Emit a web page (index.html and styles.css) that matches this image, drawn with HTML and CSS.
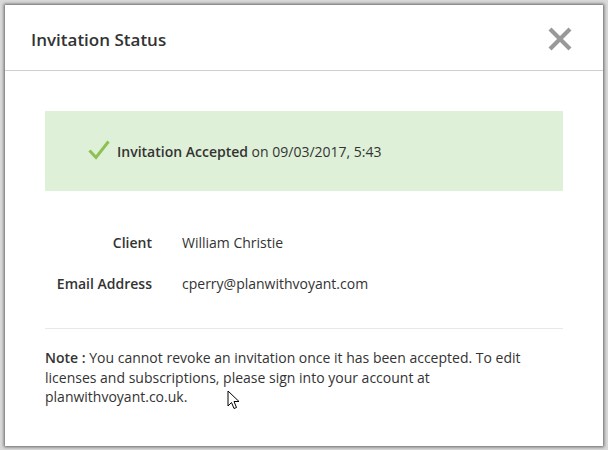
FILE: index.html
```html
<!DOCTYPE html>
<html>
<head>
<meta charset="utf-8">
<link rel="stylesheet" href="styles.css">
</head>
<body>
<div class="modal">
  <div class="modal-header">
    <h2 class="title">Invitation Status</h2>
    <svg class="close" width="26" height="26" viewBox="0 0 26 26"><path d="M3 3 L23 23 M23 3 L3 23" stroke="#999" stroke-width="4.2" fill="none"/></svg>
  </div>
  <div class="modal-body">
    <div class="alert">
      <svg class="check" width="22" height="20" viewBox="0 0 22 20"><path d="M1.5 10.5 L8 17.5 L20.5 1.5" stroke="#8dc153" stroke-width="3" fill="none" stroke-linejoin="miter"/></svg>
      <span><b>Invitation Accepted</b> on 09/03/2017, 5:43</span>
    </div>
    <div class="details">
      <div class="label">Client</div><div class="value">William Christie</div>
      <div class="label">Email Address</div><div class="value">cperry@planwithvoyant.com</div>
    </div>
    <hr class="divider">
    <p class="note"><b>Note :</b> You cannot revoke an invitation once it has been accepted. To edit licenses and subscriptions, please sign into your account at planwithvoyant.co.uk.</p>
  </div>
  <svg class="cursor" width="14" height="22" viewBox="0 0 14 22"><path d="M1 1 L1 16 L4.5 12.5 L7 18.5 L9.5 17.5 L7 11.5 L12 11.5 Z" fill="#fff" stroke="#000" stroke-width="1" stroke-linejoin="round"/></svg>
</div>
</body>
</html>
```
FILE: styles.css
```css
html, body { margin: 0; padding: 0; }
body {
  background: #d9d9d9;
  font-family: "Open Sans", "Noto Sans", sans-serif;
  color: #333;
  width: 608px;
  height: 450px;
  overflow: hidden;
}
.modal {
  position: relative;
  margin: 5px 0 0 5px;
  width: 598px;
  height: 441px;
  background: #fff;
  box-shadow: 0 0 3px 1px rgba(0,0,0,0.55);
}
.modal-header {
  height: 65px;
  border-bottom: 1px solid #cfcfcf;
  display: flex;
  align-items: center;
  justify-content: space-between;
  padding: 0 30px 0 26px;
}
.title {
  margin: 0;
  font-size: 17px;
  font-weight: 600;
  color: #333;
  padding-top: 4px;
}
.close { margin-top: 2px; }
.modal-body {
  padding: 40px 40px 0 40px;
}
.alert {
  height: 80px;
  background: #dff0d8;
  display: flex;
  align-items: center;
  padding-left: 43px;
  font-size: 14px;
  gap: 7px;
}
.alert b { font-weight: 600; }
.check { margin-top: -2px; }
.details {
  display: grid;
  grid-template-columns: 107px 1fr;
  column-gap: 30px;
  row-gap: 21px;
  margin-top: 42px;
  font-size: 14px;
  line-height: 20px;
}
.label { text-align: right; font-weight: 600; }
.divider {
  border: 0;
  border-top: 1px solid #e8e8e8;
  margin: 34px 0 0 0;
}
.note {
  margin: 19px 0 0 0;
  font-size: 14px;
  line-height: 19.5px;
}
.note b { font-weight: 600; }
.cursor {
  position: absolute;
  left: 222px;
  top: 385px;
}
```
